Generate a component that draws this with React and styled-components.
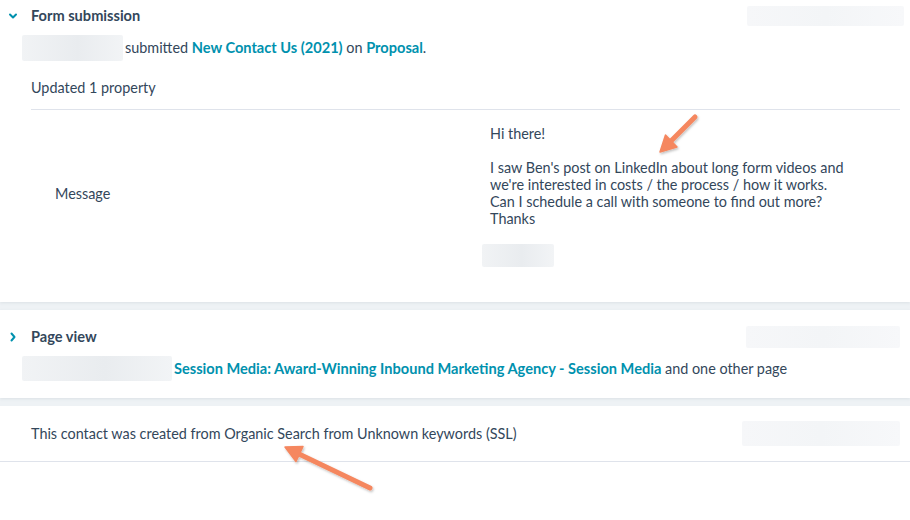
import React from 'react';
import styled, { createGlobalStyle } from 'styled-components';

const GlobalStyle = createGlobalStyle`
  body {
    margin: 0;
    background: #fff;
    font-family: Lato, "Open Sans", Arial, sans-serif;
    color: #33475b;
    -webkit-font-smoothing: antialiased;
  }
`;

const Page = styled.div`
  position: relative;
  width: 910px;
  height: 520px;
  overflow: hidden;
  background: #fff;
`;

const Timeline = styled.div`
  display: flex;
  flex-direction: column;
  gap: 8px;
  background: #eef2f5;
`;

const Card = styled.section`
  background: #fff;
  padding: ${({ $top }) => $top}px 10px ${({ $bottom }) => $bottom}px 8px;
  box-shadow: 0 1px 3px rgba(45, 62, 80, 0.09);
  ${({ $last }) => $last && 'border-bottom: 1px solid #dfe3eb; box-shadow: none;'}
`;

const CardHeader = styled.div`
  display: flex;
  align-items: center;
  height: 22px;
`;

const Toggle = styled.span`
  display: flex;
  align-items: center;
  width: 23px;
  height: 22px;
  color: #0091ae;
`;

const Title = styled.h3`
  flex: 1;
  margin: 0;
  font-size: 14.6px;
  font-weight: 700;
  line-height: 20px;
`;

const Redacted = styled.span`
  display: inline-block;
  flex-shrink: 0;
  width: ${({ $w }) => $w}px;
  height: ${({ $h }) => $h}px;
  margin-right: ${({ $pull }) => ($pull ? -$pull : 0)}px;
  border-radius: 2px;
  background: ${({ $light }) => ($light
    ? 'linear-gradient(90deg, #f6f7f9, #f3f5f7 50%, #f7f8fa)'
    : 'linear-gradient(90deg, #f1f3f5, #e9ecef 55%, #f2f4f6)')};
`;

const Summary = styled.div`
  display: flex;
  align-items: center;
  gap: 2px;
  margin-top: 8px;
  padding-left: 14px;
  font-size: 14.4px;
  line-height: 20px;
`;

const Link = styled.a`
  color: #0091ae;
  font-size: 14.6px;
  font-weight: 700;
  text-decoration: none;
`;

const Updated = styled.p`
  margin: 17px 0 0 23px;
  font-size: 14.4px;
  line-height: 20px;
`;

const PropertyRow = styled.div`
  display: grid;
  grid-template-columns: 451px 1fr;
  align-items: center;
  margin: 11px 0 0 23px;
  padding-top: 15px;
  border-top: 1px solid #dfe3eb;
`;

const PropLabel = styled.span`
  padding-left: 24px;
  margin-bottom: 4px;
  font-size: 14.4px;
  line-height: 20px;
`;

const PropValue = styled.div`
  display: flex;
  flex-direction: column;
  align-items: flex-start;
  gap: 17px;
`;

const MessageText = styled.p`
  margin: 0;
  padding-left: 8px;
  font-size: 14.4px;
  line-height: 17px;
  white-space: pre-line;
`;

const SourceRow = styled.div`
  display: flex;
  align-items: center;
  justify-content: space-between;
  padding-left: 23px;
  font-size: 14.4px;
  line-height: 20px;
`;

const Overlay = styled.svg`
  position: absolute;
  inset: 0;
  pointer-events: none;
`;

const ChevronDown = () => (
  <svg width="10" height="8" viewBox="0 0 10 8">
    <path d="M2 2.5 5 5.5 8 2.5" fill="none" stroke="currentColor" strokeWidth="2" strokeLinecap="round" strokeLinejoin="round" />
  </svg>
);

const ChevronRight = () => (
  <svg width="10" height="12" viewBox="0 0 10 12">
    <path d="M3.5 2.5 6.5 6 3.5 9.5" fill="none" stroke="currentColor" strokeWidth="2" strokeLinecap="round" strokeLinejoin="round" />
  </svg>
);

const Arrow = ({ from, base, wing1, wing2, tip }) => (
  <g filter="url(#arrowShadow)">
    <line x1={from[0]} y1={from[1]} x2={base[0]} y2={base[1]} stroke="#f5875f" strokeWidth="5" strokeLinecap="round" />
    <polygon points={`${tip.join(',')} ${wing1.join(',')} ${wing2.join(',')}`} fill="#f5875f" stroke="#f5875f" strokeWidth="1.5" strokeLinejoin="round" />
  </g>
);

const message = `Hi there!

I saw Ben's post on LinkedIn about long form videos and
we're interested in costs / the process / how it works.
Can I schedule a call with someone to find out more?
Thanks`;

export default function App() {
  return (
    <Page>
      <GlobalStyle />
      <Timeline>
        <Card $top={5} $bottom={35}>
          <CardHeader>
            <Toggle><ChevronDown /></Toggle>
            <Title>Form submission</Title>
            <Redacted $w={157} $h={20} $pull={4} $light />
          </CardHeader>
          <Summary>
            <Redacted $w={101} $h={26} />
            <span>
              submitted <Link>New Contact Us (2021)</Link> on <Link>Proposal</Link>.
            </span>
          </Summary>
          <Updated>Updated 1 property</Updated>
          <PropertyRow>
            <PropLabel>Message</PropLabel>
            <PropValue>
              <MessageText>{message}</MessageText>
              <Redacted $w={72} $h={23} />
            </PropValue>
          </PropertyRow>
        </Card>

        <Card $top={16} $bottom={17}>
          <CardHeader>
            <Toggle><ChevronRight /></Toggle>
            <Title>Page view</Title>
            <Redacted $w={154} $h={22} $light />
          </CardHeader>
          <Summary>
            <Redacted $w={150} $h={25} />
            <span>
              {' '}<Link>Session Media: Award-Winning Inbound Marketing Agency - Session Media</Link> and one other page
            </span>
          </Summary>
        </Card>

        <Card $top={15} $bottom={15} $last>
          <SourceRow>
            <span>This contact was created from Organic Search from Unknown keywords (SSL)</span>
            <Redacted $w={158} $h={25} $light />
          </SourceRow>
        </Card>
      </Timeline>

      <Overlay width="910" height="520" viewBox="0 0 910 520">
        <defs>
          <filter id="arrowShadow" x="-20%" y="-20%" width="140%" height="140%">
            <feDropShadow dx="1" dy="1.5" stdDeviation="1.2" floodColor="#000" floodOpacity="0.25" />
          </filter>
        </defs>
        <Arrow from={[695, 117]} base={[671, 141]} tip={[660, 152]} wing1={[677, 147]} wing2={[665.5, 135]} />
        <Arrow from={[370, 488]} base={[299, 454]} tip={[285, 447]} wing1={[303, 446.5]} wing2={[296, 461.5]} />
      </Overlay>
    </Page>
  );
}
